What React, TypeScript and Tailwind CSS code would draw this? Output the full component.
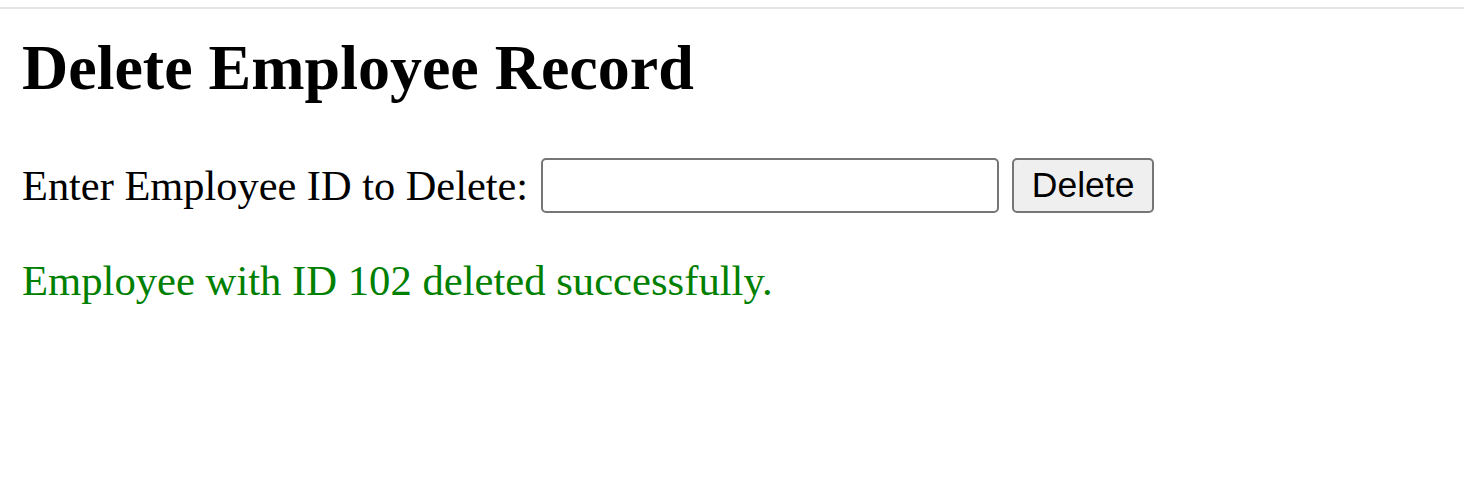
import React from "react";

export default function App() {
  return (
    <div className="w-[1464px] h-[504px] bg-white overflow-hidden" style={{ fontFamily: '"Liberation Serif", "Times New Roman", serif' }}>
      <div className="h-[7px]" />
      <div className="h-[2px] bg-[#e4e4e7]" />
      <div className="pl-[22px]">
        <h1 className="mt-[27px] text-[64px] leading-[64px] font-bold text-black" style={{ fontFamily: '"Liberation Serif", "Times New Roman", serif' }}>
          Delete Employee Record
        </h1>
        <div className="mt-[58px] flex items-center h-[55px]">
          <label className="text-[42.4px] leading-[55px] text-black">Enter Employee ID to Delete:</label>
          <input
            type="text"
            className="ml-[13px] w-[458px] h-[55px] border-2 border-[#767676] rounded-[5px] bg-white"
          />
          <button
            className="ml-[13px] w-[142px] h-[55px] border-2 border-[#767676] rounded-[5px] bg-[#efefef] text-[35.5px] text-black flex items-center justify-center"
            style={{ fontFamily: '"Liberation Sans", Arial, sans-serif' }}
          >
            Delete
          </button>
        </div>
        <p className="mt-[43px] text-[42.67px] leading-[50px] text-[#008000]">Employee with ID 102 deleted successfully.</p>
      </div>
    </div>
  );
}
